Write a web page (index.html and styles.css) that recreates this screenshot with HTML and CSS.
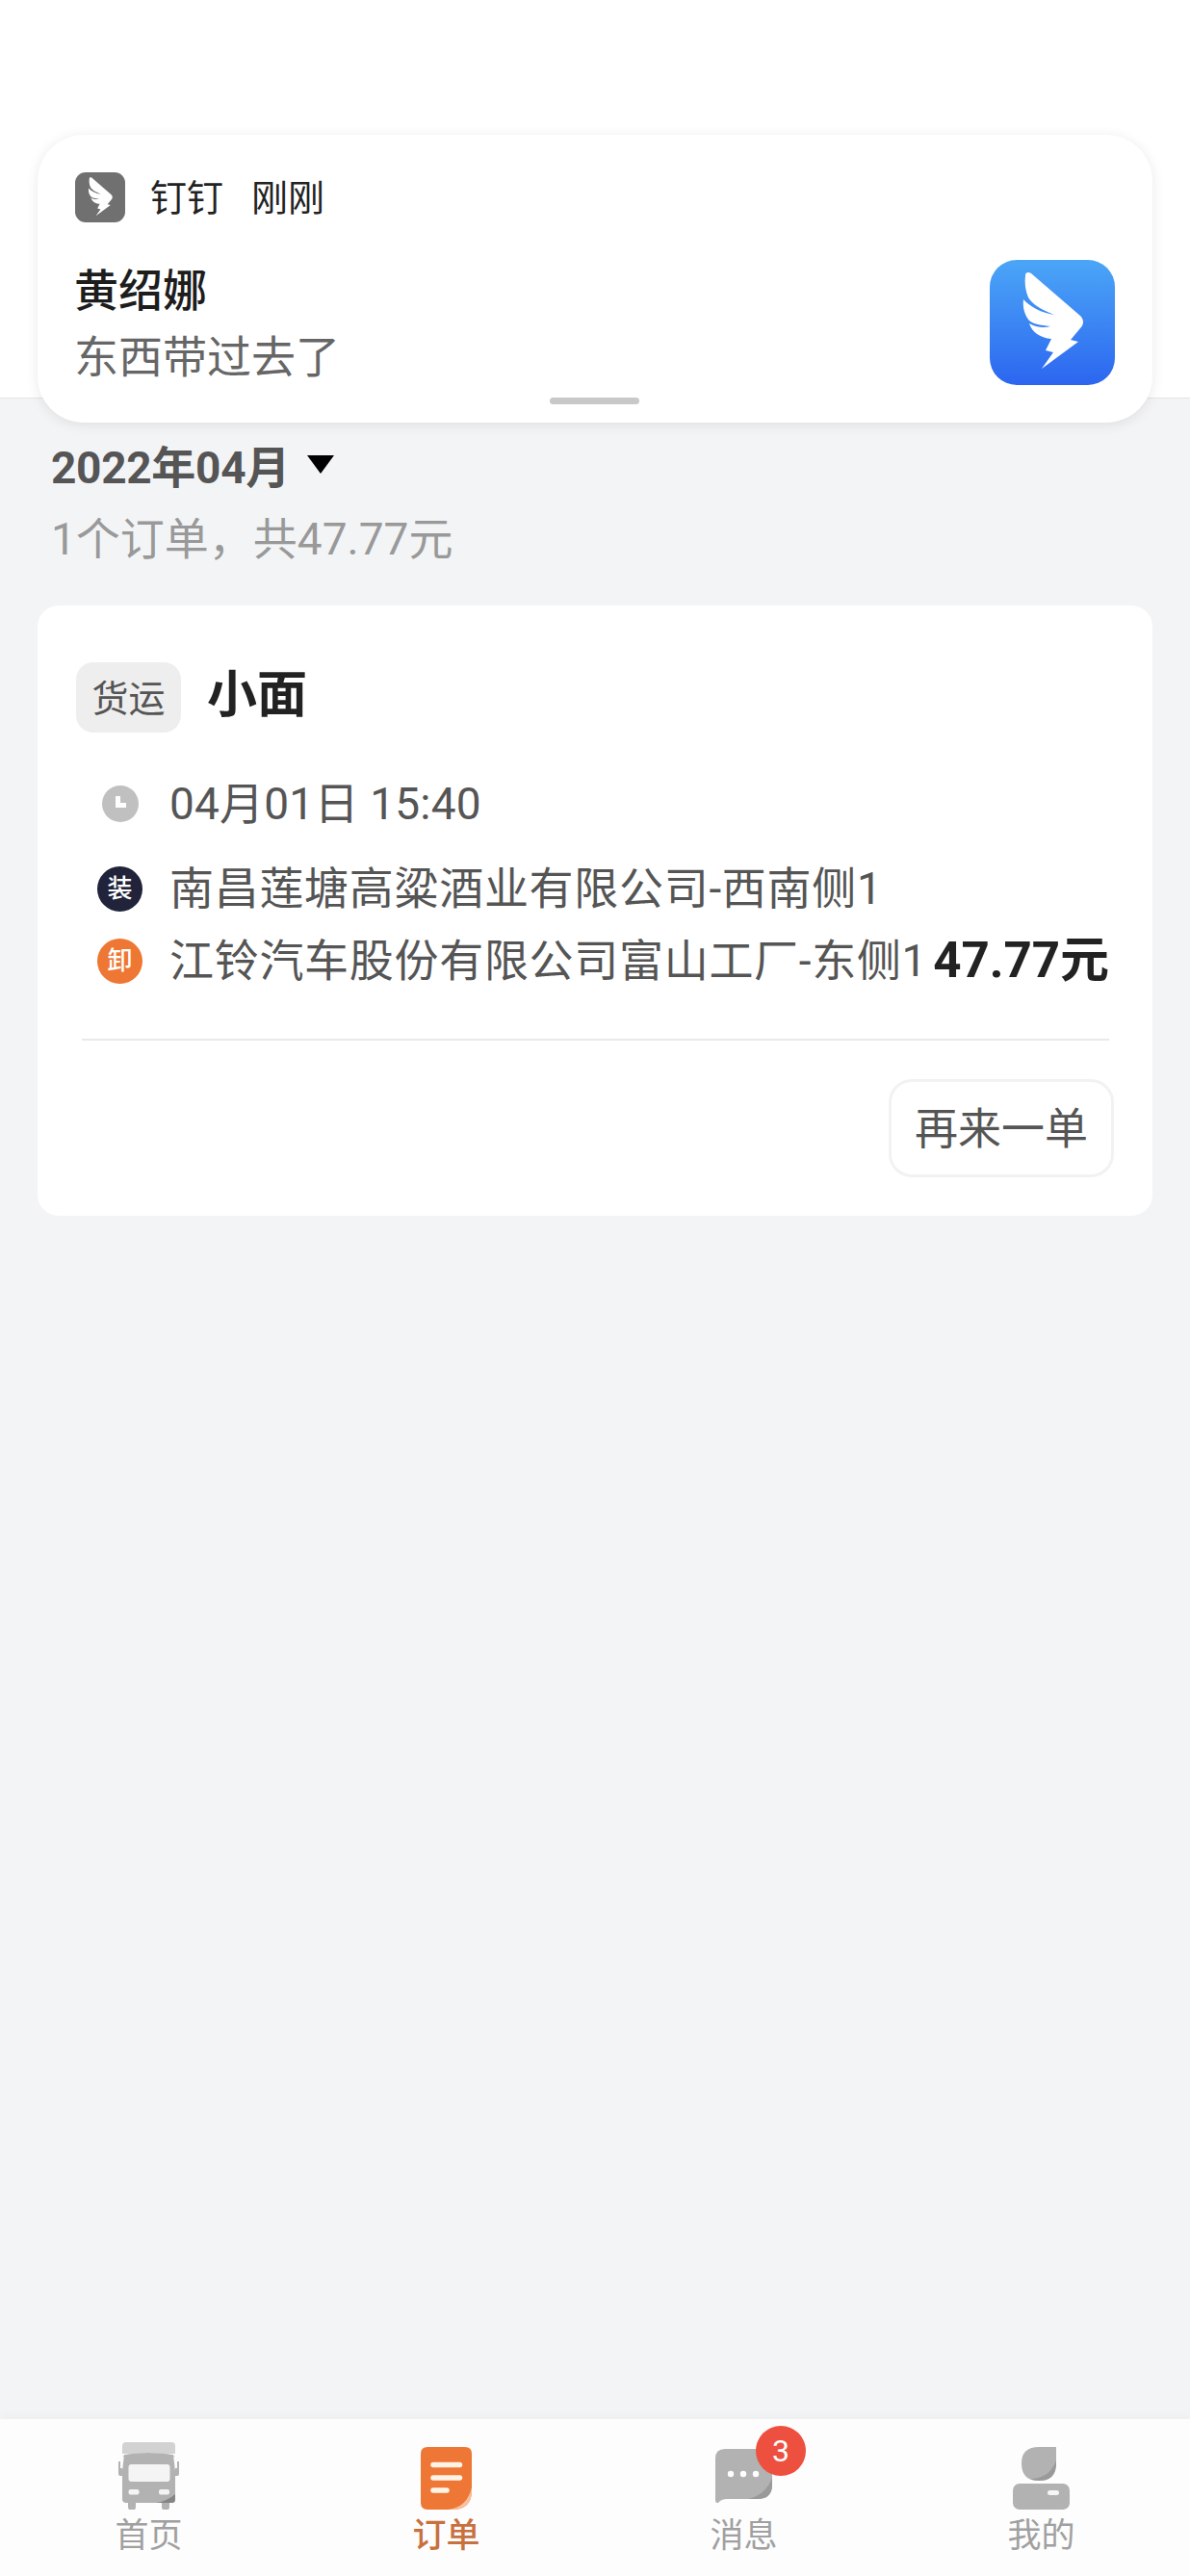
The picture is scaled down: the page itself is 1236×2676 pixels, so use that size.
FILE: index.html
```html
<!DOCTYPE html>
<html lang="zh-CN">
<head>
<meta charset="utf-8">
<title>订单</title>
<link rel="stylesheet" href="styles.css">
</head>
<body>
<svg class="defs" width="0" height="0">
  <symbol id="wing" viewBox="0 0 130 130">
    <path d="M37 16C37 13 40 12 43 14L94 58C98 62 98 67 94 71L84 83L92 85L54 113L66 96L58 94L64 82C52 81 44 75 41 66C48 70 56 71 63 69C52 68 44 66 41 63C36 57 34 49 35 41C42 49 54 55 67 57C54 52 44 46 40 39C37 32 36 24 37 16Z"/>
  </symbol>
</svg>
<div class="page">
  <header class="topbar"></header>

  <div class="notice">
    <div class="notice-head">
      <svg class="notice-app" viewBox="0 0 52 52"><rect width="52" height="52" rx="11" fill="#707070"/><use href="#wing" width="52" height="52" fill="#fff"/></svg>
      <span class="notice-name">钉钉</span>
      <span class="notice-name">刚刚</span>
    </div>
    <div class="notice-body">
      <div class="notice-text">
        <div class="notice-title">黄绍娜</div>
        <div class="notice-msg">东西带过去了</div>
      </div>
      <svg class="notice-logo" viewBox="0 0 130 130">
        <defs><linearGradient id="blue" x1="0" y1="0" x2="0" y2="1"><stop offset="0" stop-color="#4ba6f7"/><stop offset="1" stop-color="#2c66f0"/></linearGradient></defs>
        <rect width="130" height="130" rx="28" fill="url(#blue)"/>
        <use href="#wing" width="130" height="130" fill="#fff"/>
      </svg>
    </div>
    <div class="notice-handle"></div>
  </div>

  <main class="content">
    <div class="month"><span>2022年04月</span><i class="caret"></i></div>
    <div class="summary">1个订单，共47.77元</div>

    <section class="card">
      <div class="card-head">
        <span class="tag">货运</span>
        <span class="vehicle">小面</span>
      </div>
      <div class="row row-time">
        <span class="row-icon">
          <svg class="clock" viewBox="0 0 38 38"><circle cx="19" cy="19" r="19" fill="#c0c0c0"/><path d="M14 11h5v7h6v5H14z" fill="#fff"/></svg>
        </span>
        <span class="row-text row-text-time">04月01日 15:40</span>
      </div>
      <div class="row row-load">
        <span class="row-icon"><span class="dot dot-load">装</span></span>
        <span class="row-text">南昌莲塘高粱酒业有限公司-西南侧1</span>
      </div>
      <div class="row row-unload">
        <span class="row-icon"><span class="dot dot-unload">卸</span></span>
        <span class="row-text">江铃汽车股份有限公司富山工厂-东侧1</span>
        <span class="price">47.77元</span>
      </div>
      <div class="divider"></div>
      <div class="actions"><span class="again">再来一单</span></div>
    </section>
  </main>

  <nav class="tabs">
    <div class="tab">
      <div class="tab-icon">
        <svg class="i-truck" viewBox="0 0 65 70">
          <rect x="5" y="0" width="55" height="16" rx="4" fill="#d2d2d2"/>
          <path d="M5 14Q32 8 60 14L60 12L5 12Z" fill="#fff"/>
          <path d="M7 13Q32 9 58 13L60 30V59Q60 63 56 63H9Q5 63 5 59V30Z" fill="#b2b2b2"/>
          <path d="M5 27H3V20H1V33Q1 35 3 35H5ZM60 27H62V20H64V33Q64 35 62 35H60Z" fill="#b2b2b2"/>
          <rect x="11.500" y="23" width="43" height="18" rx="3" fill="#f4f4f4"/>
          <rect x="11.500" y="49" width="11" height="5.500" rx="2" fill="#f4f4f4"/>
          <rect x="43" y="49" width="11" height="5.500" rx="2" fill="#f4f4f4"/>
          <path d="M40 63Q52 61 60 54V59Q60 63 57 63Z" fill="#858585"/>
          <path d="M11 63h8v4a4 4 0 0 1-8 0ZM46 63h8v4a4 4 0 0 1-8 0Z" fill="#b2b2b2"/>
        </svg>
      </div>
      <span class="tab-label">首页</span>
    </div>
    <div class="tab tab-active">
      <div class="tab-icon">
        <svg class="i-order" viewBox="0 0 53 65">
          <path d="M7 0H46Q53 0 53 7V45Q53 65 33 65H7Q0 65 0 58V7Q0 0 7 0Z" fill="#ee7735"/>
          <path d="M53 42V45Q53 65 33 65H28Q48 63 53 42Z" fill="#f6c1a0"/>
          <path d="M13 18.500H40.500M13 32H40.500M13 45H27" stroke="#fff3e6" stroke-width="5.500" stroke-linecap="round" fill="none"/>
        </svg>
      </div>
      <span class="tab-label">订单</span>
    </div>
    <div class="tab">
      <div class="tab-icon">
        <svg class="i-chat" viewBox="0 0 59 56">
          <path d="M10 0H49Q59 0 59 10V37Q59 52 44 52H12Q6 52 3 56H2Q0 56 0 53V10Q0 0 10 0Z" fill="#b2b2b2"/>
          <path d="M59 30V37Q59 52 44 52H34Q52 48 59 30Z" fill="#9a9a9a"/>
          <circle cx="16" cy="26" r="3.200" fill="#fff"/><circle cx="29" cy="26" r="3.200" fill="#fff"/><circle cx="42" cy="26" r="3.200" fill="#fff"/>
        </svg>
        <span class="badge">3</span>
      </div>
      <span class="tab-label">消息</span>
    </div>
    <div class="tab">
      <div class="tab-icon">
        <svg class="i-user" viewBox="0 0 59 65">
          <path d="M27 0H45V17Q45 35 27 35Q9 35 9 17Q9 0 27 0Z" fill="#b2b2b2"/>
          <path d="M45 14V17Q45 35 27 35Q22 35 18 33Q38 33 45 14Z" fill="#9a9a9a"/>
          <rect x="0" y="38" width="59" height="27" rx="7" fill="#b2b2b2"/>
          <rect x="36" y="45" width="12" height="5" rx="2.500" fill="#f6f6f6"/>
        </svg>
      </div>
      <span class="tab-label">我的</span>
    </div>
  </nav>
</div>
</body>
</html>
```
FILE: styles.css
```css
* { box-sizing: border-box; }
html, body { margin: 0; padding: 0; }
body {
  font-family: Roboto, "Noto Sans CJK SC", sans-serif;
  background: #f3f4f6;
}
.defs { position: absolute; }
.page {
  position: relative;
  width: 1236px;
  height: 2676px;
  display: flex;
  flex-direction: column;
  overflow: hidden;
}
.topbar {
  height: 414px;
  flex: none;
  background: #fff;
  border-bottom: 1px solid #e4e4e6;
}

/* notification overlay */
.notice {
  position: absolute;
  left: 39px;
  top: 140px;
  width: 1158px;
  height: 299px;
  background: #fff;
  border-radius: 48px;
  box-shadow: 0 2px 14px rgba(0, 0, 0, .09);
  padding: 39px 39px 0;
  display: flex;
  flex-direction: column;
}
.notice-head {
  display: flex;
  align-items: center;
  height: 52px;
}
.notice-app { width: 52px; height: 52px; flex: none; margin-right: 26px; }
.notice-name {
  font-size: 38px;
  line-height: 52px;
  margin-top: 2px;
  color: #222;
  margin-right: 29px;
}
.notice-body {
  display: flex;
  justify-content: space-between;
  margin-top: 39px;
}
.notice-text { padding-top: 2px; margin-left: -1px; }
.notice-title {
  font-size: 46px;
  line-height: 60px;
  font-weight: 500;
  color: #1d1d1d;
}
.notice-msg {
  font-size: 46px;
  line-height: 60px;
  margin-top: 9px;
  color: #666;
}
.notice-logo { width: 130px; height: 130px; flex: none; margin-right: 0; }
.notice-handle {
  position: absolute;
  left: 532px;
  top: 273px;
  width: 93px;
  height: 7px;
  border-radius: 4px;
  background: #c8c8c8;
}

/* main */
.content {
  flex: 1;
  padding: 38px 39px 0;
}
.month {
  display: flex;
  align-items: center;
  height: 60px;
  margin-left: 14px;
  font-size: 46px;
  font-weight: 700;
  color: #555;
  letter-spacing: -.3px;
}
.caret {
  width: 0;
  height: 0;
  margin: 0 0 0 18px;
  border-left: 14px solid transparent;
  border-right: 14px solid transparent;
  border-top: 19px solid #000;
}
.summary {
  height: 60px;
  line-height: 60px;
  margin: 18px 0 0 14px;
  font-size: 46px;
  color: #999;
}
.card {
  margin-top: 39px;
  background: #fff;
  border-radius: 22px;
  padding: 59px 40px 40px;
}
.card-head { display: flex; align-items: center; height: 73px; }
.tag {
  width: 109px;
  height: 73px;
  line-height: 76px;
  text-align: center;
  border-radius: 18px;
  background: #eee;
  font-size: 38px;
  color: #555;
}
.vehicle {
  margin: -14px 0 0 27px;
  font-size: 52px;
  font-weight: 700;
  color: #222;
}
.row { display: flex; align-items: center; height: 56px; }
.row-time { margin-top: 46px; }
.row-load { margin-top: 32px; }
.row-unload { margin-top: 19px; }
.row-icon {
  width: 47px;
  margin: 0 28px 0 22px;
  flex: none;
  display: flex;
  justify-content: center;
}
.clock { width: 38px; height: 38px; }
.dot {
  width: 47px;
  height: 47px;
  line-height: 47px;
  border-radius: 50%;
  text-align: center;
  font-size: 26px;
  font-weight: 500;
  color: #fff;
}
.dot-load { background: #20233a; }
.dot-unload { background: #ee7733; }
.row-text {
  font-size: 46px;
  line-height: 56px;
  color: #555;
  white-space: nowrap;
  letter-spacing: .7px;
}
.row-text-time { letter-spacing: .2px; }
.price {
  margin: -10px 5px 0 auto;
  font-size: 51px;
  font-weight: 700;
  color: #222;
  white-space: nowrap;
}
.divider {
  height: 2px;
  margin: 53px 5px 0 6px;
  background: #e9e9e9;
}
.actions {
  display: flex;
  justify-content: flex-end;
  margin-top: 40px;
}
.again {
  width: 234px;
  height: 102px;
  line-height: 100px;
  text-align: center;
  border: 3px solid #f2f2f2;
  border-radius: 24px;
  font-size: 45px;
  color: #555;
}

/* tab bar */
.tabs {
  flex: none;
  height: 163px;
  display: grid;
  grid-template-columns: repeat(4, 1fr);
  padding-top: 24px;
  background: #fdfdfd;
  box-shadow: 0 -4px 8px rgba(0, 0, 0, .025);
}
.tab {
  display: flex;
  flex-direction: column;
  align-items: center;
}
.tab-icon {
  position: relative;
  height: 70px;
  display: flex;
  align-items: flex-end;
  justify-content: center;
}
.i-truck { width: 65px; height: 70px; display: block; }
.i-order { width: 53px; height: 65px; display: block; }
.i-chat { width: 59px; height: 56px; display: block; margin-bottom: 7px; }
.i-user { width: 59px; height: 65px; display: block; }
.badge {
  position: absolute;
  left: 42px;
  top: -17px;
  width: 52px;
  height: 52px;
  line-height: 52px;
  border-radius: 50%;
  text-align: center;
  background: #ee5040;
  color: #fff;
  font-size: 32px;
}
.tab-label {
  margin-top: 6px;
  font-size: 35px;
  line-height: 44px;
  color: #a0a0a0;
}
.tab-active .tab-label {
  color: #c9703f;
  font-weight: 500;
}
```
